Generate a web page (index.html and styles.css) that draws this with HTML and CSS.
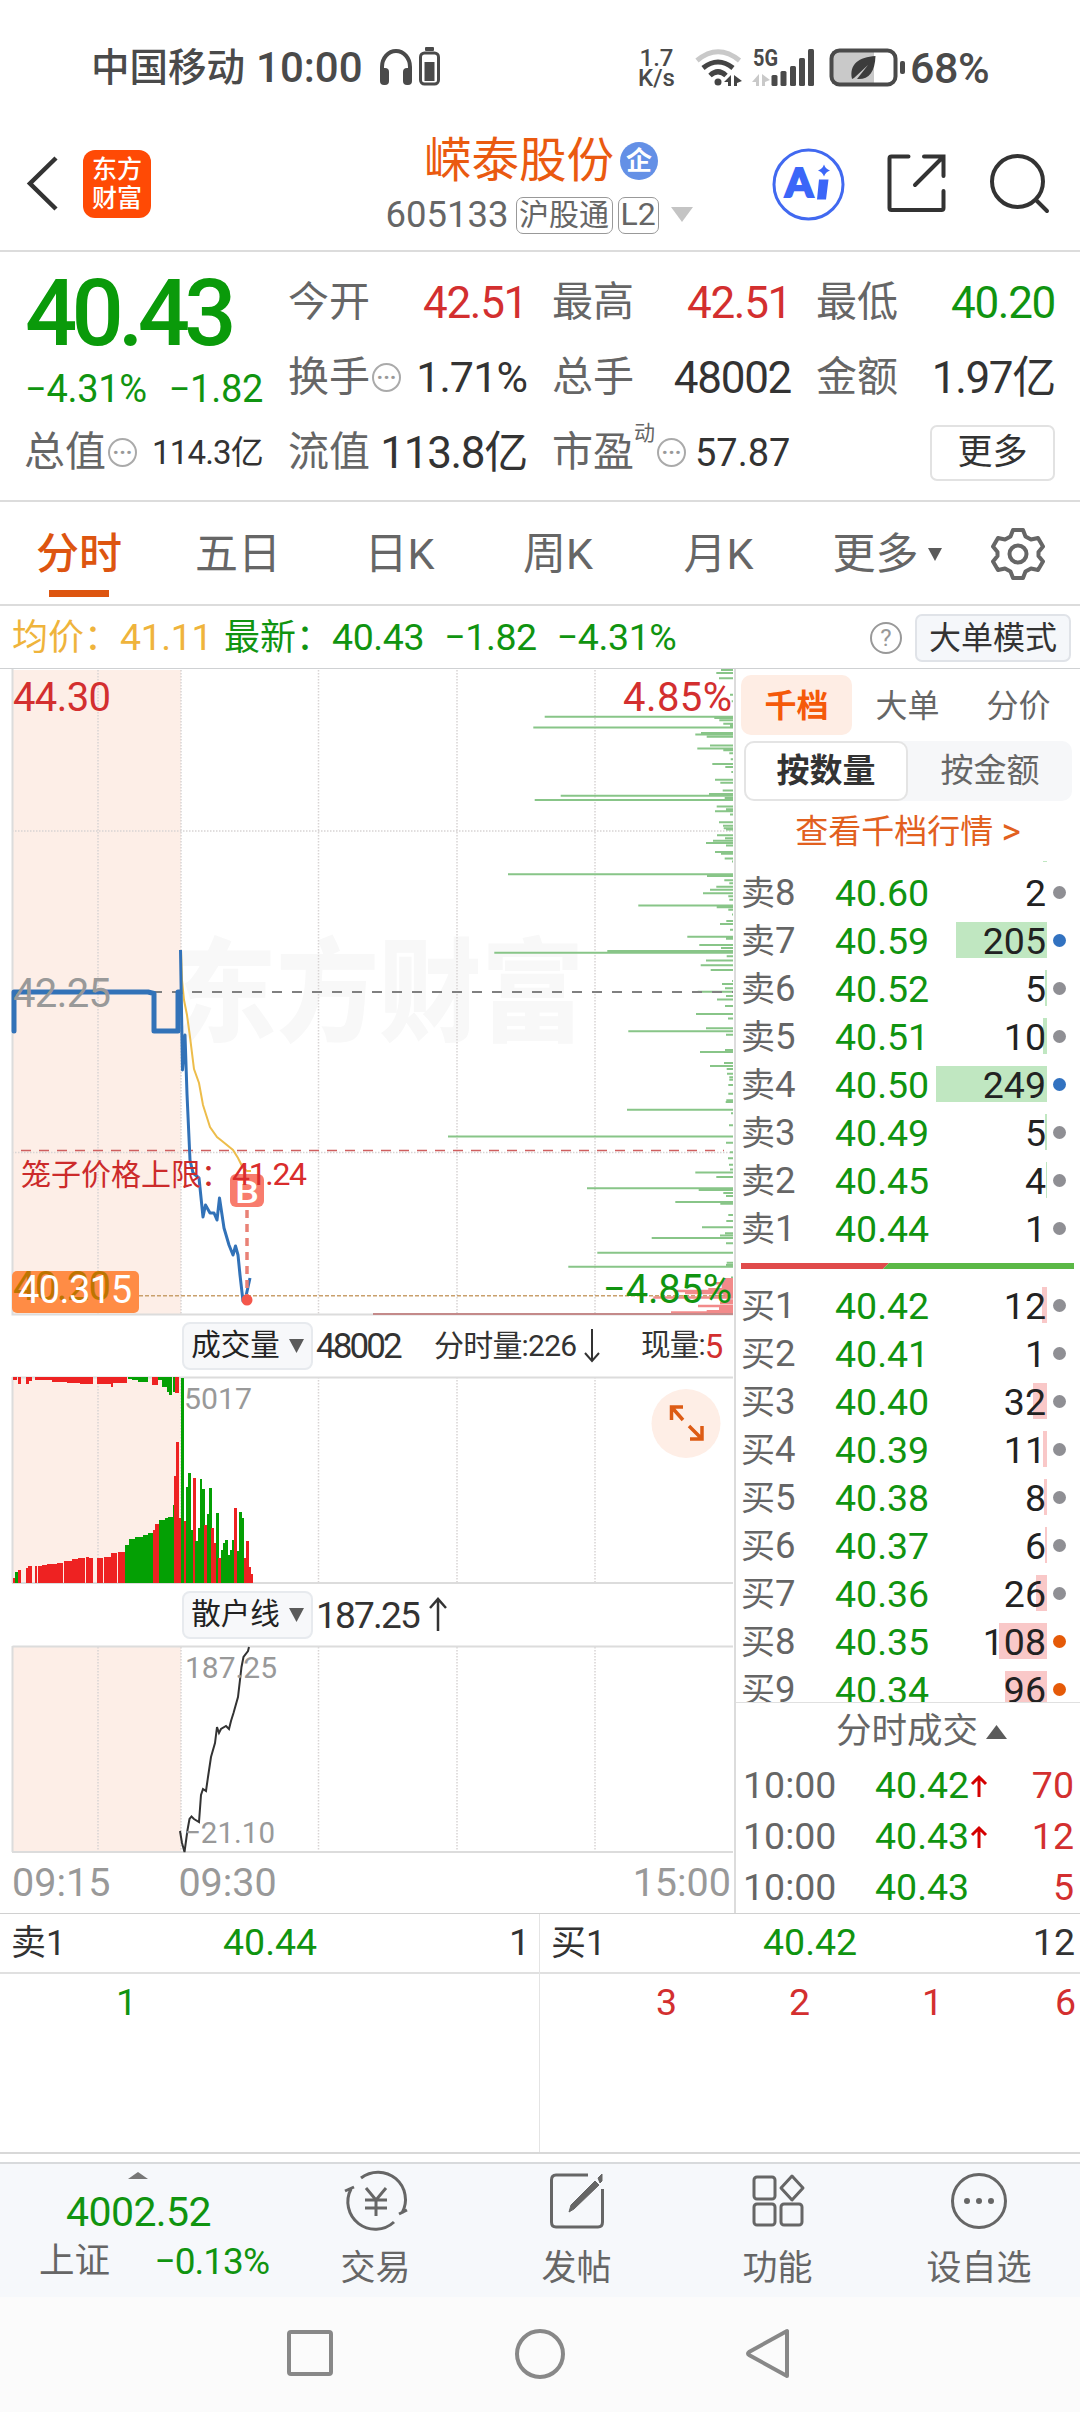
FILE: index.html
```html
<!DOCTYPE html>
<html lang="zh-CN">
<head>
<meta charset="utf-8">
<title>嵘泰股份 605133</title>
<link rel="stylesheet" href="styles.css">
</head>
<body>
<header class="status">
  <div class="status-left">
    <span class="carrier">中国移动</span><span class="clock">10:00</span>
    <svg class="ic-head" width="62" height="42" viewBox="378 48 62 42"><path d="M382 76V68a14 16 0 0 1 28 0V76" fill="none" stroke="#4a4a4a" stroke-width="4"/><rect x="380" y="69" width="9" height="17" rx="4" fill="#4a4a4a"/><rect x="403" y="69" width="9" height="17" rx="4" fill="#4a4a4a"/><rect x="425" y="48" width="9" height="4" rx="1" fill="#4a4a4a"/><rect x="420.500" y="54" width="18" height="31" rx="4" fill="#fff" stroke="#4a4a4a" stroke-width="3"/><rect x="424.500" y="63" width="10" height="19" fill="#4a4a4a"/></svg>
  </div>
  <div class="status-right">
    <div class="speed"><span>1.7</span><span>K/s</span></div>
    <svg width="213" height="40" viewBox="694 48 213 40">
      <g fill="none" stroke-linecap="butt"><path d="M697 60.500Q718 43 739.500 60.500" stroke="#c9c9c9" stroke-width="5"/><path d="M703 68Q718 56 733 68" stroke="#444" stroke-width="5"/><path d="M710 75.500Q718 68 726 75.500" stroke="#444" stroke-width="5"/></g>
      <circle cx="718" cy="82" r="3.500" fill="#444"/><path d="M731 75v11h-3v-4h-4zM734 75l8 6-5 2v3h-3z" fill="#444"/>
      <path d="M759 74v12h-3v-4h-4zM762 74l8 6-5 2v4h-3z" fill="#c9c9c9"/>
      <text x="753" y="66" class="net" textLength="25" lengthAdjust="spacingAndGlyphs">5G</text>
      <g fill="#4a4a4a"><rect x="771.500" y="75" width="6" height="11" rx="1.500"/><rect x="780.500" y="71" width="6" height="15" rx="1.500"/><rect x="790" y="66" width="6" height="20" rx="1.500"/><rect x="799" y="58" width="6" height="28" rx="1.500"/><rect x="808" y="49" width="6" height="37" rx="1.500"/></g>
      <rect x="832" y="51" width="42" height="33" fill="#c9c9c9"/><rect x="831.500" y="50.500" width="64" height="34" rx="8" fill="none" stroke="#4a4a4a" stroke-width="4"/><rect x="900" y="61" width="5" height="13" rx="2" fill="#4a4a4a"/>
      <path d="M852 79C849 64 859 57 875.500 56C875 73 868 80 857 79L868 65L854 78Z" fill="#3c3c3c"/>
    </svg>
    <span class="batt">68%</span>
  </div>
</header>
<section class="topbar">
  <div class="brand">
    <svg width="32" height="56" viewBox="27 157 32 56"><path d="M56 159L30 184.500L56 210" fill="none" stroke="#333" stroke-width="4.500"/></svg>
    <div class="logo"><span>东方</span><span>财富</span></div>
  </div>
  <div class="title">
    <div class="name"><span>嵘泰股份</span><i class="corp">企</i></div>
    <div class="code"><span class="num">605133</span><b>沪股通</b><b class="l2">L2</b><svg width="22" height="16"><path d="M0 0H22L11 15Z" fill="#c4c4c4"/></svg></div>
  </div>
  <div class="tools">
    <svg width="72" height="72" viewBox="772 148 72 72"><circle cx="808.500" cy="184.500" r="34.500" fill="none" stroke="#4169f0" stroke-width="3"/><text x="785" y="197" class="ai">A</text><path d="M819 179.500h9.500l-2.500 20h-9zM824 164.500q1.500 4.500 6 6q-4.500 1.500-6 6q-1.500-4.500-6-6q4.500-1.500 6-6" fill="#3b66f8"/></svg>
    <svg width="60" height="60" viewBox="887 155 60 60"><path d="M908.500 157.500H891.500q-2 0-2 2V209q0 2 2 2H941.500q2 0 2-2V192M924 157.500H943.500V177M943 158L915 186" fill="none" stroke="#333" stroke-width="4" stroke-linecap="round"/></svg>
    <svg width="62" height="62" viewBox="990 153 62 62"><g fill="none" stroke="#333" stroke-width="4" stroke-linecap="round"><circle cx="1018.500" cy="181.500" r="25.500"/><path d="M1037 200L1048 211"/></g></svg>
  </div>
</section>
<section class="quote">
  <div class="now"><strong>40.43</strong><div class="chg"><span>−4.31%</span><span>−1.82</span></div></div>
  <div class="cell"><label>今开</label><em class="red">42.51</em></div>
  <div class="cell"><label>最高</label><em class="red">42.51</em></div>
  <div class="cell"><label>最低</label><em class="green">40.20</em></div>
  <div class="cell"><label>换手</label><i class="dots">···</i><em class="md">1.71%</em></div>
  <div class="cell"><label>总手</label><em>48002</em></div>
  <div class="cell"><label>金额</label><em>1.97亿</em></div>
  <div class="cell"><label>总值</label><i class="dots">···</i><em class="sm">114.3亿</em></div>
  <div class="cell"><label>流值</label><em>113.8亿</em></div>
  <div class="cell"><label>市盈</label><sup>动</sup><i class="dots after">···</i><em class="pe">57.87</em></div>
  <div class="cell"><span class="more">更多</span></div>
</section>
<nav class="tabs">
  <span class="on">分时</span><span>五日</span><span>日K</span><span>周K</span><span>月K</span><span class="drop">更多<svg width="14" height="13"><path d="M0 0H14L7 13Z" fill="#5b5b5b"/></svg></span>
  <svg width="56" height="56" viewBox="-28 -28 56 56"><path d="M-5 -24H5L7.500 -17.500L13 -14.500L20 -16L25 -7.500L20.500 -2V2L25 7.500L20 16L13 14.500L7.500 17.500L5 24H-5L-7.500 17.500L-13 14.500L-20 16L-25 7.500L-20.500 2V-2L-25 -7.500L-20 -16L-13 -14.500L-7.500 -17.500Z" fill="none" stroke="#666" stroke-width="4" stroke-linejoin="round"/><circle r="8.500" fill="none" stroke="#666" stroke-width="4"/></svg>
</nav>
<section class="info">
  <span class="avg">均价：<em>41.11</em></span><span class="last">最新：<em>40.43</em><em>−1.82</em><em>−4.31%</em></span>
  <i class="help">?</i><span class="mode">大单模式</span>
</section>
<main class="main">
  <div class="charts">
    <svg class="chart" width="735" height="647" viewBox="0 669 735 647">
      <rect x="12" y="670" width="169" height="644" class="pre"/>
      <text x="174" y="1033" class="mark" textLength="410" lengthAdjust="spacingAndGlyphs">东方财富</text>
      <path class="grid" d="M98 670V1314M181 670V1314M318.500 670V1314M457 670V1314M595 670V1314M12 831H733M12 1152.500H733"/>
      <path class="frame" d="M12.500 669V1314.500H733"/>
      <path id="depth-sell" class="dsell"/><path id="depth-buy" class="dbuy"/>
      <path d="M373 1314H733" stroke="#c48a8a" stroke-width="2"/>
      <path d="M12 992H733" stroke="#808080" stroke-width="2" stroke-dasharray="10 10"/>
      <path d="M21 1150.500H724" stroke="#cf5f5f" stroke-width="1.500" stroke-dasharray="10 8"/>
      <path d="M139 1295.700H733" stroke="#c9a06c" stroke-width="1.500" stroke-dasharray="4 2"/>
      <path class="price thick" d="M14 1031V992H148L154 993.500V1031H172L178 1031V992H181"/>
      <path class="avgline" d="M181 950L182 980L184 1000L187 1015L190 1037L194 1069L199 1083L203 1105L210 1127L217 1137L222 1141L233 1150L238 1158L243 1168L247 1171H251"/>
      <path class="price" d="M180.500 950L182.500 1070L185 1035L187 1094L190 1160L193 1173L199 1178L203 1217L205.500 1205L210 1213L214 1213L217 1220L219.500 1198L224 1228L229 1245L233 1255L235.500 1246L238 1255L240 1275L243 1301L246 1296L250 1278"/>
      <path d="M247 1210V1300" stroke="#e98176" stroke-width="3.500" stroke-dasharray="8 6"/>
      <circle cx="247" cy="1300" r="5.500" fill="#f4574b"/>
      <rect x="230" y="1174" width="34" height="33" rx="6" fill="#f87c6d"/><text x="235" y="1203" class="bmark" textLength="24" lengthAdjust="spacingAndGlyphs">B</text>
      <text x="13" y="711" class="t40 fred" textLength="98">44.30</text>
      <text x="13" y="1007" class="t40 fgray" textLength="98">42.25</text>
      <text x="732" y="711" text-anchor="end" class="t40 fred" textLength="109">4.85%</text>
      <text x="732" y="1303" text-anchor="end" class="t40 fgreen" textLength="129">−4.85%</text>
      <text x="21" y="1185" class="cage">笼子价格上限：</text><text x="232" y="1185" class="cagev" textLength="75">41.24</text>
      <rect x="12" y="1271" width="127" height="42" rx="5" fill="#ff8c45"/>
      <text x="13" y="1300" class="t40" fill="#bd7400" textLength="98">40.20</text><text x="18" y="1303" class="t38" fill="#fff" textLength="114">40.315</text>
    </svg>
    <div class="sub"><span class="pick">成交量<svg width="15" height="14"><path d="M0 0H15L7.500 14Z" fill="#5b5b5b"/></svg></span><span class="v1">48002</span><span class="v2">分时量:226<svg width="16" height="34"><path d="M8 0V32M1 24L8 32L15 24" fill="none" stroke="#333" stroke-width="2"/></svg></span><span class="v3">现量:<em class="red">5</em></span></div>
    <div class="volwrap">
      <svg class="chart" width="735" height="209" viewBox="0 1376 735 209">
        <rect x="12" y="1377" width="169" height="206" class="pre"/>
        <path class="grid" d="M98 1377V1583M181 1377V1583M318.500 1377V1583M457 1377V1583M595 1377V1583"/>
        <path class="frame" d="M12.500 1377.500H733M12.500 1377V1583M12 1583H733"/>
        <g id="volume" shape-rendering="crispEdges"></g>
        <text x="184" y="1409" class="axis" textLength="68" lengthAdjust="spacingAndGlyphs">5017</text>
        <circle cx="686" cy="1423.500" r="34.500" fill="#feeee6"/><path d="M683 1407H671.500V1420M672 1407.500L683 1420M690 1439H702V1426M701.500 1438.500L689 1426" fill="none" stroke="#dd5b14" stroke-width="3.500"/>
      </svg>
    </div>
    <div class="sub"><span class="pick">散户线<svg width="15" height="14"><path d="M0 0H15L7.500 14Z" fill="#5b5b5b"/></svg></span><span class="v4">187.25<svg width="18" height="34"><path d="M9 33V1M1 10L9 1L17 10" fill="none" stroke="#333" stroke-width="2.500"/></svg></span></div>
    <svg class="chart" width="735" height="209" viewBox="0 1645 735 209">
      <rect x="12" y="1646" width="169" height="206" class="pre"/>
      <path class="grid" d="M98 1647V1852M181 1647V1852M318.500 1647V1852M457 1647V1852M595 1647V1852"/>
      <path class="frame" d="M12.500 1646.500H733M12.500 1646V1852M12 1852H733"/>
      <path d="M180 1831L182 1843L184.500 1852L187.500 1830L189.500 1819L191.500 1816.500L194 1819L199 1822L201 1795L203 1789L206 1791L208 1777L211 1757L215 1743L217 1727L219 1733L221 1729L226 1726L229 1729L231 1721L233.500 1713L238 1697L241.500 1667L243.500 1657L248 1651L249 1647" fill="none" stroke="#333" stroke-width="2"/>
      <text x="185" y="1678" class="axis" textLength="92" lengthAdjust="spacingAndGlyphs">187.25</text>
      <text x="184" y="1843" class="axis" textLength="91" lengthAdjust="spacingAndGlyphs">−21.10</text>
    </svg>
    <div class="times"><span>09:15</span><span>09:30</span><span>15:00</span></div>
  </div>
  <aside class="book">
    <div class="btabs"><span class="on">千档</span><span>大单</span><span>分价</span></div>
    <div class="seg"><span class="on">按数量</span><span>按金额</span></div>
    <div class="link">查看千档行情&nbsp;<span class="gt">&gt;</span></div>
    <div class="asks">
      <div class="row"><label>卖9</label><em>40.61</em><span class="q"><i style="width:4px"></i>10</span><b></b></div>
      <div class="row"><label>卖8</label><em>40.60</em><span class="q">2</span><b></b></div>
      <div class="row"><label>卖7</label><em>40.59</em><span class="q"><i style="width:91px"></i>205</span><b class="blue"></b></div>
      <div class="row"><label>卖6</label><em>40.52</em><span class="q"><i style="width:2px"></i>5</span><b></b></div>
      <div class="row"><label>卖5</label><em>40.51</em><span class="q"><i style="width:4px"></i>10</span><b></b></div>
      <div class="row"><label>卖4</label><em>40.50</em><span class="q"><i style="width:111px"></i>249</span><b class="blue"></b></div>
      <div class="row"><label>卖3</label><em>40.49</em><span class="q"><i style="width:2px"></i>5</span><b></b></div>
      <div class="row"><label>卖2</label><em>40.45</em><span class="q"><i style="width:1px"></i>4</span><b></b></div>
      <div class="row"><label>卖1</label><em>40.44</em><span class="q">1</span><b></b></div>
    </div>
    <svg class="ratio" width="333" height="6"><path d="M0 0H148L142 6H0Z" fill="#e04b4b"/><path d="M148 0H333V6H142Z" fill="#5bb846"/></svg>
    <div class="bids">
      <div class="row"><label>买1</label><em>40.42</em><span class="q"><i style="width:5px"></i>12</span><b></b></div>
      <div class="row"><label>买2</label><em>40.41</em><span class="q">1</span><b></b></div>
      <div class="row"><label>买3</label><em>40.40</em><span class="q"><i style="width:14px"></i>32</span><b></b></div>
      <div class="row"><label>买4</label><em>40.39</em><span class="q"><i style="width:4px"></i>11</span><b></b></div>
      <div class="row"><label>买5</label><em>40.38</em><span class="q"><i style="width:3px"></i>8</span><b></b></div>
      <div class="row"><label>买6</label><em>40.37</em><span class="q"><i style="width:2px"></i>6</span><b></b></div>
      <div class="row"><label>买7</label><em>40.36</em><span class="q"><i style="width:11px"></i>26</span><b></b></div>
      <div class="row"><label>买8</label><em>40.35</em><span class="q"><i style="width:48px"></i>108</span><b class="orange"></b></div>
      <div class="row"><label>买9</label><em>40.34</em><span class="q"><i style="width:42px"></i>96</span><b class="orange"></b></div>
    </div>
    <div class="ticks">
      <div class="thead">分时成交<svg width="21" height="14"><path d="M0 14H21L10.500 0Z" fill="#5b5b5b"/></svg></div>
      <div class="tick"><span>10:00</span><em>40.42<svg width="16" height="22"><path d="M8 22V2M1 9L8 2L15 9" fill="none" stroke="#d40000" stroke-width="3"/></svg></em><b>70</b></div>
      <div class="tick"><span>10:00</span><em>40.43<svg width="16" height="22"><path d="M8 22V2M1 9L8 2L15 9" fill="none" stroke="#d40000" stroke-width="3"/></svg></em><b>12</b></div>
      <div class="tick"><span>10:00</span><em>40.43</em><b>5</b></div>
    </div>
  </aside>
</main>
<section class="queue">
  <div class="side"><div class="qh"><span>卖1</span><em>40.44</em><span>1</span></div><div class="qs green"><span>1</span></div></div>
  <div class="side"><div class="qh"><span>买1</span><em>40.42</em><span>12</span></div><div class="qs red"><span>3</span><span>2</span><span>1</span><span>6</span></div></div>
</section>
<footer class="bottom">
  <div class="index"><svg width="20" height="7"><path d="M0 7H20L10 0Z" fill="#777"/></svg><strong>4002.52</strong><div><span>上证</span><em>−0.13%</em></div></div>
  <div class="item"><svg width="66" height="60" viewBox="-33 -30 66 60"><g fill="none" stroke="#666" stroke-width="3"><path d="M-15 -23A27.500 27.500 0 0 1 26 12M23 13L31 9M18 21A27.500 27.500 0 0 1 -25 -12M-31 -10L-22 -14"/><path d="M-10 -13L0 -1L10 -13M0 -1V15M-11 -1H11M-11 7H11"/></g></svg><span>交易</span></div>
  <div class="item"><svg width="60" height="60" viewBox="-30 -30 60 60"><path d="M11 -26H-21Q-25.500 -26 -25.500 -21V21Q-25.500 26 -21 26H21Q25.500 26 25.500 21V-12" fill="none" stroke="#666" stroke-width="3"/><path d="M18 -20L22 -16L-3 8L-8 11L-6 4ZM21 -23L25 -27V-20L23 -18Z" fill="#666" stroke="#666"/></svg><span>发帖</span></div>
  <div class="item"><svg width="60" height="60" viewBox="-30 -30 60 60"><g fill="none" stroke="#666" stroke-width="3"><rect x="-24" y="-24" width="21" height="22" rx="3"/><rect x="-24" y="3" width="21" height="21" rx="3"/><rect x="3" y="3" width="21" height="21" rx="3"/><path d="M14 -25L25 -13L14 -1L3 -13Z" stroke-linejoin="round"/></g></svg><span>功能</span></div>
  <div class="item"><svg width="60" height="60" viewBox="-30 -30 60 60"><circle r="26.500" fill="none" stroke="#666" stroke-width="3"/><circle cx="-12" r="3" fill="#666"/><circle r="3" fill="#666"/><circle cx="12" r="3" fill="#666"/></svg><span>设自选</span></div>
</footer>
<div class="sysnav">
  <svg width="48" height="50"><rect x="3" y="3" width="42" height="42" rx="2" fill="none" stroke="#888" stroke-width="4"/></svg>
  <svg width="52" height="52"><circle cx="26" cy="26" r="23" fill="none" stroke="#888" stroke-width="4"/></svg>
  <svg width="46" height="54"><path d="M41 4V49L3 28Q1 26.500 3 25Z" fill="none" stroke="#888" stroke-width="4" stroke-linejoin="round"/></svg>
</div>
<script src="script.js"></script>
</body>
</html>
```
FILE: styles.css
```css
* { box-sizing: border-box; }
body { margin: 0; width: 1080px; height: 2412px; overflow: hidden; background: #fff; color: #333; font-family: Roboto, "Noto Sans CJK SC", sans-serif; line-height: 1; }
em, i, b { font-style: normal; font-weight: 400; }
svg { display: block; flex: none; overflow: visible; }
span, label, em { white-space: nowrap; }
.red { color: #d32f2f; }
.green { color: #109410; }

.status { height: 118px; padding: 38px 89px 20px 91px; display: flex; justify-content: space-between; align-items: center; color: #4a4a4a; font-weight: 500; }
.status-left, .status-right { display: flex; align-items: center; }
.carrier { font-size: 38.5px; }
.clock { font-size: 42px; margin-left: 11px; margin-right: 14px; width: 108px; }
.status-right { height: 60px; }
.speed { width: 39px; margin-right: 18px; display: flex; flex-direction: column; align-items: center; font-size: 24px; }
.speed span { height: 20px; line-height: 20px; }
.net { font: 700 23px Roboto, sans-serif; fill: #4a4a4a; }
.batt { font-size: 43px; letter-spacing: -0.5px; width: 81px; margin-left: 3px; }

.topbar { height: 134px; border-bottom: 2px solid #dcdcdc; display: flex; justify-content: space-between; align-items: center; padding: 0 29px 0 27px; }
.brand { display: flex; align-items: center; width: 300px; gap: 24px; }
.logo { width: 68px; height: 68px; border-radius: 12px; background: #ff4a05; color: #fff; font-size: 25px; font-weight: 500; display: flex; flex-direction: column; align-items: center; justify-content: center; gap: 4px; }
.logo span { height: 25px; line-height: 25px; }
.title { width: 330px; height: 112px; display: flex; flex-direction: column; align-items: center; }
.name { display: flex; align-items: center; height: 64px; color: #ea5a10; font-size: 47.5px; margin-left: 4px; padding-top: 4px; }
.name .corp { width: 38px; height: 38px; border-radius: 50%; background: #6490e6; color: #fff; font-size: 26px; font-weight: 700; display: flex; align-items: center; justify-content: center; margin-left: 6px; }
.code { display: flex; align-items: center; height: 50px; font-size: 36.5px; color: #666; white-space: nowrap; }
.code .num { letter-spacing: 0; }
.code b { height: 37px; width: 97px; border: 1.5px solid #999; border-radius: 7px; font-size: 30px; line-height: 33px; text-align: center; margin-left: 7px; }
.code .l2 { width: 41px; margin: 0 12px 0 5px; font-size: 32px; }
.tools { width: 300px; display: flex; align-items: center; justify-content: space-between; padding-left: 21px; }
.ai { font: 900 40px Lato, Roboto, sans-serif; fill: #3b66f8; stroke: #3b66f8; stroke-width: 2; }

.quote { height: 250px; border-bottom: 2px solid #dcdcdc; padding: 13px 24px 14px 25px; display: grid; grid-template-columns: repeat(4, 238px); column-gap: 26px; grid-template-rows: 75px 75px 75px; }
.now { grid-row: span 2; color: #0a9a0a; }
.now strong { display: block; font-size: 92px; font-weight: 500; letter-spacing: -5.8px; padding-top: 3px; }
.chg { display: flex; justify-content: space-between; font-size: 38px; letter-spacing: -0.3px; color: #109410; margin-top: 10px; }
.cell { display: flex; align-items: center; font-size: 44px; }
.cell label { font-size: 41px; color: #666; margin-left: -1px; }
.cell em { margin-left: auto; letter-spacing: -1.3px; }
.cell .md { font-size: 43px; letter-spacing: -0.9px; }
.cell .sm { font-size: 33px; letter-spacing: -0.8px; }
.cell .pe { font-size: 38px; letter-spacing: 0; margin-left: 9px; }
.dots { width: 29px; height: 29px; border: 2px solid #aaa; border-radius: 50%; font: 700 22px/25px Roboto, sans-serif; letter-spacing: 0; text-align: center; color: #999; margin-left: 2px; }
.cell sup { font-size: 21px; color: #666; align-self: flex-start; margin-top: 8px; }
.dots.after { margin-left: 2px; }
.more { margin-left: auto; width: 125px; height: 56px; border: 2px solid #e2e2e2; border-radius: 7px; font-size: 35px; display: flex; align-items: center; justify-content: center; }

.tabs { height: 104px; border-bottom: 2px solid #dcdcdc; display: grid; grid-template-columns: 158px 160px 163px 154px 167px 170px 1fr; align-items: center; justify-items: center; font-size: 43px; color: #666; }
.tabs > span { height: 104px; line-height: 104px; }
.tabs .on { color: #dd5510; font-weight: 500; background: linear-gradient(#dd5510, #dd5510) center 88px / 60px 7px no-repeat; }
.tabs .drop { display: flex; align-items: center; gap: 9px; }
.tabs > svg { margin-left: -16px; }

.info { height: 63px; border-bottom: 1px solid #cfd1d3; display: flex; align-items: center; font-size: 36px; padding: 1px 9px 0 12px; }
.info em { font-size: 37.5px; letter-spacing: -0.4px; }
.avg { color: #efb43c; width: 212px; }
.last { color: #109410; }
.last em { margin-right: 20px; }
.help { margin-left: auto; width: 32px; height: 32px; border: 2px solid #999; border-radius: 50%; color: #999; font-size: 24px; line-height: 28px; text-align: center; }
.mode { width: 156px; height: 48px; margin-left: 13px; border: 2px solid #e0e3e8; border-radius: 7px; background: #f5f7fa; font-size: 32px; display: flex; align-items: center; justify-content: center; }
.avg, .last { display: flex; align-items: center; }

.main { display: flex; height: 1245px; border-bottom: 1px solid #d0d0d0; }
.charts { width: 736px; border-right: 2px solid #dcdcdc; }
.pre { fill: #fdeee7; }
.grid { fill: none; stroke: #d8d4d4; stroke-width: 1.5; stroke-dasharray: 1.5 1.5; }
.frame { fill: none; stroke: #dcdcdc; stroke-width: 2; }
.mark { font: 900 112px "Noto Sans CJK SC", sans-serif; fill: #f8f8f8; }
.dsell { stroke: #88c588; stroke-width: 2; }
.dbuy { stroke: #f28a8a; stroke-width: 2.5; }
.price { fill: none; stroke: #3272b8; stroke-width: 3; stroke-linejoin: round; }
.price.thick { stroke-width: 5; stroke-linecap: round; }
.avgline { fill: none; stroke: #edbd4b; stroke-width: 2; }
.t40 { font-size: 40px; }
.t38 { font-size: 38px; }
.fred { fill: #d32f2f; }
.fgray { fill: #999; }
.fgreen { fill: #109410; }
.bmark { font: 500 31px Roboto, sans-serif; fill: #fff; }
.cage { font-size: 30px; fill: #cc2b2b; }
.cagev { font-size: 32px; fill: #d92c2c; }
.axis { font-size: 30px; fill: #999; }
.sub { height: 60px; padding-left: 182px; display: flex; align-items: center; font-size: 35px; }
.pick { width: 131px; height: 48px; border: 2px solid #e7eaee; border-radius: 8px; background: #f7f8fa; display: flex; align-items: center; justify-content: center; font-size: 29.5px; gap: 9px; color: #222; }
.v1 { margin-left: 3px; width: 118px; letter-spacing: -2.9px; }
.v2, .v3 { font-size: 29.5px; letter-spacing: -0.8px; display: flex; align-items: center; }
.v2 { width: 207px; font-size: 30px; gap: 8px; }
.v3 em { font-size: 33px; }
.v4 { display: flex; align-items: center; margin-left: 3px; font-size: 37px; letter-spacing: -1.8px; gap: 10px; }
.times { height: 58px; padding: 0 3px 0 12px; display: flex; align-items: center; font-size: 39.5px; color: #999; }
.times span:nth-child(2) { margin-left: 68px; }
.times span:last-child { margin-left: auto; }

.book { width: 344px; height: 1244px; display: flex; flex-direction: column; }
.btabs { height: 60px; margin: 6px 0 6px 5px; width: 333px; display: grid; grid-template-columns: 111px 111px 111px; font-size: 32px; color: #666; }
.btabs span { display: flex; align-items: center; justify-content: center; padding-top: 2px; }
.btabs .on { background: #feede4; color: #f55a0a; border-radius: 10px; font-weight: 700; }
.seg { height: 60px; width: 328px; margin-left: 8px; background: #f6f7f9; border-radius: 10px; display: grid; grid-template-columns: 164px 164px; font-size: 33px; color: #666; }
.seg span { display: flex; align-items: center; justify-content: center; }
.seg .on { background: #fff; border: 2px solid #e4e4e4; border-radius: 10px; color: #333; font-weight: 700; }
.link { height: 60px; padding-top: 2px; display: flex; align-items: center; justify-content: center; color: #e2601e; font-size: 33px; }
.gt { font-size: 37px; }
.asks { height: 392px; overflow: hidden; display: flex; flex-direction: column; justify-content: flex-end; }
.row { height: 48px; flex: none; padding: 0 12px 0 5px; display: grid; grid-template-columns: 94px 99px 112px 20px; align-items: center; font-size: 37.5px; }
.row label { color: #666; font-size: 36.5px; padding-top: 2px; }
.row label::first-letter { font-size: 34px; }
.row em { color: #109410; padding-top: 2px; }
.q { position: relative; text-align: right; height: 36px; line-height: 39px; color: #222; }
.q i { position: absolute; right: -1px; top: 0; height: 36px; background: #c0e7c1; z-index: -1; }
.bids .q i { background: #f9c8c8; }
.row b { width: 13px; height: 13px; border-radius: 50%; background: #8f8f94; margin-left: 7px; }
.row .blue { background: #3272c0; }
.row .orange { background: #e55a08; }
.ratio { margin: 11px 0 12px 5px; }
.bids { height: 421px; overflow: hidden; }
.ticks { border-top: 1px solid #e0e0e0; flex: 1; }
.thead { height: 57px; display: flex; align-items: center; justify-content: center; gap: 8px; font-size: 35.5px; color: #666; padding-left: 27px; }
.tick { height: 51px; display: grid; grid-template-columns: 132px 130px 1fr; align-items: center; padding: 0 6px 0 7px; font-size: 37.5px; color: #666; }
.tick em { color: #109410; display: flex; align-items: center; gap: 2px; }
.tick b { color: #d32f2f; text-align: right; }

.queue { display: grid; grid-template-columns: 539px 541px; height: 240px; border-bottom: 2px solid #d8d8d8; font-size: 37.5px; }
.side + .side { border-left: 1px solid #e4e4e4; }
.qh { height: 60px; border-bottom: 2px solid #e0e0e0; display: grid; grid-template-columns: 212px 1fr auto; align-items: center; padding: 0 9px 0 11px; }
.side + .side .qh { padding-right: 5px; }
.qh em { color: #109410; }
.qh span:first-child { font-size: 35px; }
.qs { display: grid; grid-template-columns: repeat(4, 133px); text-align: right; padding: 9px 0 0 4px; line-height: 38px; }

.bottom { height: 135px; margin-top: 8px; border-top: 2px solid #d8dadc; background: #f6f8fb; display: grid; grid-template-columns: 275px 201px 201px 201px 1fr; color: #666; }
.index { display: flex; flex-direction: column; align-items: center; padding-top: 8px; }
.index strong { font-size: 41px; font-weight: 400; letter-spacing: -0.6px; color: #109410; margin: 13px 0 0 2px; height: 41px; }
.index div { display: flex; align-items: center; justify-content: space-between; width: 230px; margin: 10px 0 0 33px; font-size: 35.5px; }
.index em { font-size: 37px; letter-spacing: -1px; color: #109410; }
.item { display: flex; flex-direction: column; align-items: center; padding-top: 7px; font-size: 35px; gap: 20px; }
.sysnav { height: 115px; background: #fbfbfb; display: flex; justify-content: center; align-items: center; gap: 180px; padding: 0 3px 2px 0; }
```
FILE: script.js
```js
// Order-book depth, [left edge, row] on a 3x / 2.306x grid anchored at (400, 660)
const sell = [963,23,949,30,957,42,990,80,995,95,434,131,943,134,958,139,970,147,990,151,400,156,903,168,886,172,920,177,930,197,892,204,970,208,988,215,992,229,937,240,976,247,994,258,945,276,961,283,968,301,927,309,482,313,974,318,404,323,950,338,978,344,945,349,990,356,957,374,969,382,971,388,978,391,951,404,975,411,939,417,918,422,978,428,945,443,963,447,974,458,996,465,324,494,921,498,973,508,988,515,949,523,930,530,909,538,985,545,988,553,715,566,950,570,985,576,996,587,979,602,960,609,990,622,862,638,978,643,898,657,963,664,622,671,283,675,980,683,918,693,902,704,932,715,996,740,966,747,975,757,893,765,978,775,951,783,975,798,888,816,984,827,918,849,685,856,978,864,975,899,900,904,972,929,930,936,980,943,981,954,988,962,988,968,985,980,985,1000,979,1015,977,1019,681,1037,993,1045,987,1073,144,1099,978,1113,990,1135,984,1149,987,1164,990,1175,886,1182,949,1192,561,1218,896,1222,970,1229,978,1236,826,1250,961,1254,985,1280,979,1294,906,1308,975,1322,960,1327,755,1333,978,1345,592,1367,980,1390,978,1395,505,1399,993,1424];
const buy = [975,1428,968,1433,942,1437,965,1442,965,1446,925,1451,829,1455,855,1460,970,1465,760,1470,980,1477,960,1483,894,1490,957,1494,957,1498,920,1502,813,1505];
const bars = a => {
  let d = '';
  for (let i = 0; i < a.length; i += 2) d += `M${(400 + a[i] / 3).toFixed(1)} ${(660 + a[i + 1] / 2.306).toFixed(1)}H733`;
  return d;
};
document.getElementById('depth-sell').setAttribute('d', bars(sell));
document.getElementById('depth-buy').setAttribute('d', bars(buy));

// Volume columns: [x start, x end, top, bottom, colour], thirds of a pixel from (0, 1365)
const B = 654, T = 36;
const cols = [
  [38,44,640,B,'r'],[44,54,622,B,'g'],[54,62,616,B,'r'],[78,84,608,B,'r'],[84,96,604,B,'r'],[104,111,603,B,'r'],[113,119,603,B,'r'],[120,125,603,B,'r'],[127,141,600,B,'r'],[142,170,597,B,'r'],[171,190,594,B,'r'],[192,215,588,B,'r'],[215,235,583,B,'r'],[235,256,580,B,'r'],[258,267,577,B,'r'],[268,278,578,B,'r'],[292,310,578,B,'r'],[311,333,577,B,'r'],[334,351,564,B,'r'],[354,374,562,B,'r'],
  [374,388,539,B,'g'],[388,404,522,B,'g'],[404,430,516,B,'g'],[430,445,509,B,'g'],[445,460,503,B,'g'],[460,466,495,B,'r'],[466,478,478,B,'r'],[478,495,465,B,'g'],[495,505,460,B,'g'],[505,519,456,B,'g'],[519,523,420,B,'g'],[522,530,333,B,'r'],[529,538,230,B,'r'],[538,544,460,B,'r'],
  [38,50,T,45,'r'],[54,62,T,57,'r'],[78,86,T,56,'r'],[86,95,T,47,'r'],[104,125,T,44,'r'],[127,155,T,45,'r'],[155,200,T,52,'r'],[200,240,T,53,'r'],[240,278,T,56,'r'],[292,332,T,57,'r'],[332,340,T,65,'r'],[340,381,T,55,'r'],[384,395,T,41,'g'],[395,415,T,45,'g'],[415,445,T,51,'g'],[456,475,T,60,'r'],[475,487,T,46,'g'],[487,500,T,66,'g'],[500,507,T,82,'g'],[507,516,T,90,'g'],[519,524,T,82,'g'],[524,538,T,83,'r']
];
const open = '38g 467r 366g 323g 495g 340r 527g 489g 342g 373g 479r 447g 369g 488r 533r 444g 579r 555g 534g 526g 571g 555g 525g 429r 558g 441g 458g 579r 529r 607r 627r'.split(' ');
open.forEach((s, i) => cols.push([544 + i * 6.93, 552 + i * 6.93, parseInt(s, 10), B, s.slice(-1)]));
const ink = { r: '#ee2222', g: '#04a004' };
document.getElementById('volume').innerHTML = cols.map(([a, b, t, e, c]) =>
  `<rect x="${(a / 3).toFixed(2)}" y="${(1365 + t / 3).toFixed(2)}" width="${((b - a) / 3).toFixed(2)}" height="${((e - t) / 3).toFixed(2)}" fill="${ink[c]}"/>`).join('');
```
